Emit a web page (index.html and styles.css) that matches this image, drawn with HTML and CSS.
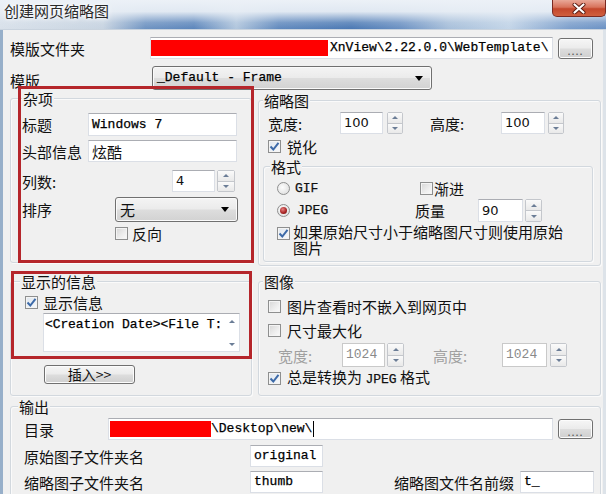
FILE: index.html
```html
<!DOCTYPE html>
<html lang="zh-CN">
<head>
<meta charset="utf-8">
<title>创建网页缩略图</title>
<link rel="stylesheet" href="styles.css">
</head>
<body>
<div class="win">
  <div class="titlebar">
    <div class="title">创建网页缩略图</div>
    <div class="close"><svg width="14" height="11" viewBox="0 0 14 11"><path d="M2.5 1.5 L11.5 9.5 M11.5 1.5 L2.5 9.5" stroke="#5a1a10" stroke-width="4" stroke-linecap="round"/><path d="M2.5 1.5 L11.5 9.5 M11.5 1.5 L2.5 9.5" stroke="#fff" stroke-width="2.2" stroke-linecap="round"/></svg></div>
  </div>
  <div class="client">
    <div class="row r-folder">
      <span class="lbl lw-folder">模版文件夹</span>
      <div class="edit e-folder"><span class="redact rd-folder"></span><span class="mono">XnView\2.22.0.0\WebTemplate\</span></div>
      <div class="btn b-dots">....</div>
    </div>
    <div class="row r-tpl">
      <span class="lbl lw-tpl">模版</span>
      <div class="combo c-tpl"><span class="mono">_Default - Frame</span><span class="arrow"></span></div>
    </div>

    <div class="mid">
      <div class="col">
        <div class="group g-misc">
          <div class="legend">杂项</div>
          <div class="row m1"><span class="lbl lw-66">标题</span><div class="edit e-149"><span class="mono">Windows 7</span></div></div>
          <div class="row m2"><span class="lbl lw-66">头部信息</span><div class="edit e-149 e-h22"><span class="cjk">炫酷</span></div></div>
          <div class="row m3"><span class="lbl lw-150">列数:</span><div class="edit e-num"><span class="num">4</span></div><div class="spin sp-m3"><i class="up"></i><i class="dn"></i></div></div>
          <div class="row m4"><span class="lbl lw-93">排序</span><div class="combo c-sort"><span>无</span><span class="arrow"></span></div></div>
          <div class="row m5"><span class="chk"></span><span class="lbl">反向</span></div>
        </div>
        <div class="group g-info">
          <div class="legend">显示的信息</div>
          <div class="row i-chk"><span class="chk on"><svg width="11" height="11" viewBox="0 0 11 11"><path d="M1.5 5.5 L4.3 8.5 L9.5 1.8" fill="none" stroke="#3d6aa8" stroke-width="2"/></svg></span><span class="lbl">显示信息</span></div>
          <div class="memo"><span class="mono memo-text">&lt;Creation Date&gt;&lt;File T:</span><div class="vscroll"><i class="up"></i><i class="dn"></i></div></div>
          <div class="btn b-insert">插入&gt;&gt;</div>
        </div>
      </div>

      <div class="col">
        <div class="group g-thumb">
          <div class="legend">缩略图</div>
          <div class="row t1">
            <span class="lbl lw-72">宽度:</span><div class="edit e-num"><span class="num">100</span></div><div class="spin sp-t1a"><i class="up"></i><i class="dn"></i></div>
            <span class="lbl lw-71 hgt">高度:</span><div class="edit e-num e-44"><span class="num">100</span></div><div class="spin sp-t1b"><i class="up"></i><i class="dn"></i></div>
          </div>
          <div class="row t2"><span class="chk on"><svg width="11" height="11" viewBox="0 0 11 11"><path d="M1.5 5.5 L4.3 8.5 L9.5 1.8" fill="none" stroke="#3d6aa8" stroke-width="2"/></svg></span><span class="lbl">锐化</span></div>
          <div class="group g-fmt">
            <div class="legend">格式</div>
            <div class="row f1">
              <div class="fcol"><span class="radio"></span><span class="lbl mono-l">GIF</span></div>
              <span class="chk ck-prog"></span><span class="lbl">渐进</span>
            </div>
            <div class="row f2">
              <div class="fcol fcol2"><span class="radio sel"><b></b></span><span class="lbl mono-l">JPEG</span></div>
              <span class="lbl lw-63">质量</span><div class="edit e-q"><span class="num">90</span></div><div class="spin sp-q"><i class="up"></i><i class="dn"></i></div>
            </div>
            <div class="row f3"><span class="chk on"><svg width="11" height="11" viewBox="0 0 11 11"><path d="M1.5 5.5 L4.3 8.5 L9.5 1.8" fill="none" stroke="#3d6aa8" stroke-width="2"/></svg></span><span class="lbl wrap">如果原始尺寸小于缩略图尺寸则使用原始图片</span></div>
          </div>
        </div>
        <div class="group g-img">
          <div class="legend">图像</div>
          <div class="row g1"><span class="chk"></span><span class="lbl">图片查看时不嵌入到网页中</span></div>
          <div class="row g2"><span class="chk"></span><span class="lbl">尺寸最大化</span></div>
          <div class="row g3 dis">
            <span class="lbl lw-74">宽度:</span><div class="edit e-num e-dis"><span class="mono">1024</span></div><div class="spin sp-g3a"><i class="up"></i><i class="dn"></i></div>
            <span class="lbl lw-69 hgt2">高度:</span><div class="edit e-num e-45 e-dis"><span class="mono">1024</span></div><div class="spin sp-g3b"><i class="up"></i><i class="dn"></i></div>
          </div>
          <div class="row g4"><span class="chk on"><svg width="11" height="11" viewBox="0 0 11 11"><path d="M1.5 5.5 L4.3 8.5 L9.5 1.8" fill="none" stroke="#3d6aa8" stroke-width="2"/></svg></span><span class="lbl">总是转换为 <span class="mono-l">JPEG</span> 格式</span></div>
        </div>
      </div>
    </div>

    <div class="group g-out">
      <div class="legend">输出</div>
      <div class="row o1">
        <span class="lbl lw-84">目录</span>
        <div class="edit e-dir"><span class="redact rd-dir"></span><span class="mono">\Desktop\new\</span><span class="caret"></span></div>
        <div class="btn b-dots">....</div>
      </div>
      <div class="row o2"><span class="lbl lw-226">原始图子文件夹名</span><div class="edit e-sub"><span class="mono">original</span></div></div>
      <div class="row o3">
        <span class="lbl lw-226">缩略图子文件夹名</span><div class="edit e-sub"><span class="mono">thumb</span></div>
        <span class="lbl lw-126 pre">缩略图文件名前缀</span><div class="edit e-pre"><span class="mono">t_</span></div>
      </div>
    </div>
  </div>

  <div class="mark mk1"></div>
  <div class="mark mk2"></div>
</div>
</body>
</html>
```

FILE: styles.css
```css
* { box-sizing: border-box; }
html, body { margin: 0; padding: 0; }
body {
  width: 606px; height: 494px; overflow: hidden;
  font-family: "Noto Sans CJK SC", "Microsoft YaHei", sans-serif;
  font-size: 15px; color: #111; background: #f0f0f0;
}
.win { position: relative; width: 606px; height: 494px; display: flex; flex-direction: column; overflow: hidden; }

/* title bar */
.titlebar {
  height: 30px; flex: none; display: flex; align-items: flex-start;
  background:
    linear-gradient(to bottom, rgba(236,241,247,1) 0%, rgba(232,238,245,0.95) 40%, rgba(225,233,242,0.2) 78%, rgba(225,233,242,0) 100%),
    linear-gradient(to right, #d9e1ea 0%, #c8d4e1 17%, #6d92c1 24%, #5b85bb 32%, #b1c6dd 39%, #5f88bd 46%, #4a78b3 58%, #6a90c2 66%, #a7bfda 74%, #c3d5e8 84%, #7b9ecb 94%, #6a91c4 100%);
  border-bottom: 1px solid #c9d3de;
}
.title { font-size: 15px; line-height: 18px; padding: 2px 0 0 4px; color: #2a2a2a; text-shadow: 0 0 6px #fff, 0 0 3px #fff; }
.close {
  margin-left: auto; margin-right: 0; width: 54px; height: 17px;
  border: 1px solid #7a2a22; border-top: none; border-radius: 0 0 5px 5px;
  background: linear-gradient(to bottom, #e9a898 0%, #d8735c 45%, #c4472c 55%, #d0603f 100%);
  display: flex; align-items: center; justify-content: center;
}

/* client */
.client {
  flex: 1; display: flex; flex-direction: column;
  border-left: 3px solid #97afc9; border-right: 3px solid #dde3e9;
  padding: 7px 2px 0 7px; background: #f0f0f0;
}
.row { display: flex; align-items: center; flex: none; }
.lbl { display: block; flex: none; line-height: 17px; white-space: nowrap; }
.mono { font-family: "Liberation Mono", monospace; font-size: 13px; line-height: 16px; white-space: pre; color: #000; -webkit-text-stroke: 0.25px #000; }
.mono-l { font-family: "Liberation Mono", monospace; font-size: 13px; -webkit-text-stroke: 0.25px currentColor; }
.num { font-family: "DejaVu Sans", "Liberation Sans", sans-serif; font-size: 13px; line-height: 16px; }
.cjk { font-size: 15px; line-height: 17px; }

/* edits */
.edit {
  flex: none; height: 22px; background: #fff; display: flex; align-items: center;
  border: 1px solid #dbdfe6; border-top-color: #abadb3; padding: 0 3px; overflow: hidden;
}
.redact { display: block; flex: none; background: #f00; height: 16px; }
.caret { display: block; width: 1px; height: 16px; background: #000; margin-left: 1px; }

/* buttons / combos */
.btn {
  flex: none; border: 1px solid #707070; border-radius: 3px;
  background: linear-gradient(to bottom, #f6f6f6 0%, #ebebeb 48%, #dddddd 52%, #cfcfcf 100%);
  display: flex; align-items: center; justify-content: center;
  box-shadow: inset 0 0 0 1px #fcfcfc;
}
.b-dots { width: 35px; height: 21px; margin-left: 5px; font-size: 11px; letter-spacing: 1px; color: #555; line-height: 10px; padding-top: 4px; }
.combo {
  flex: none; display: flex; align-items: center; justify-content: space-between;
  border: 1px solid #707070; border-radius: 3px; padding: 0 8px 0 4px;
  background: linear-gradient(to bottom, #f4f4f4 0%, #ebebeb 48%, #dddddd 52%, #d2d2d2 100%);
  box-shadow: inset 0 0 0 1px #fafafa;
}
.arrow { width: 0; height: 0; border-left: 4px solid transparent; border-right: 4px solid transparent; border-top: 5px solid #000; }

/* spin */
.spin { flex: none; display: flex; flex-direction: column; height: 22px; width: 17px; border: 1px solid #c4c7cc; border-radius: 2px; background: #f3f3f3; }
.spin i, .vscroll i { flex: 1; display: flex; align-items: center; justify-content: center; background: linear-gradient(#fafafa, #e9e9e9); }
.spin i + i { border-top: 1px solid #c4c7cc; }
.spin i::after, .vscroll i::after { content: ""; width: 0; height: 0; border-left: 3px solid transparent; border-right: 3px solid transparent; }
.spin .up::after, .vscroll .up::after { border-bottom: 3px solid #6b7d96; }
.spin .dn::after, .vscroll .dn::after { border-top: 3px solid #6b7d96; }

/* check / radio */
.chk {
  flex: none; width: 13px; height: 13px; border: 1px solid #8e8f8f;
  background: linear-gradient(135deg, #d6d6d6 0%, #eeeeee 60%, #fbfbfb 100%);
  box-shadow: inset 0 0 0 1px #f4f4f4; display: flex; align-items: center; justify-content: center;
  margin-right: 4px;
}
.chk.on { background: linear-gradient(135deg, #dfe6ee, #f7f9fb); }
.radio {
  flex: none; width: 13px; height: 13px; border-radius: 50%; border: 1px solid #8e8f8f;
  background: radial-gradient(circle at 40% 40%, #fdfdfd, #d9d9d9);
  display: flex; align-items: center; justify-content: center;
}
.radio b { width: 7px; height: 7px; border-radius: 50%; background: radial-gradient(circle at 40% 35%, #e88080, #a32020 60%, #6a1010); }

/* groups */
.group {
  flex: none; border: 1px solid #d2d8de; border-radius: 3px;
  box-shadow: inset 1px 1px 0 #fafafa, 1px 1px 0 #fafafa;
}
.legend { width: fit-content; height: 17px; line-height: 17px; margin-top: -9px; background: #f0f0f0; padding: 0 1px; white-space: nowrap; }

/* top rows */
.r-folder { height: 22px; }
.lw-folder { width: 140px; padding-top: 1px; }
.e-folder { width: 403px; padding-left: 0; }
.rd-folder { width: 177px; margin-right: 2px; }
.r-tpl { margin-top: 7px; height: 24px; }
.lw-tpl { width: 142px; padding-top: 4px; }
.c-tpl { width: 280px; height: 24px; }

/* middle */
.mid { display: grid; grid-template-columns: 242px 343px; column-gap: 6px; }
.col { display: flex; flex-direction: column; }

.g-misc { margin-top: 8px; height: 165px; padding-left: 11px; }
.m1 { margin-top: 6px; }
.lw-66 { width: 66px; }
.e-149 { width: 149px; height: 23px; }
.e-h22 { height: 22px; }
.m2 { margin-top: 4px; }
.m3 { margin-top: 8px; }
.lw-150 { width: 150px; }
.e-num { width: 43px; }
.sp-m3 { margin-left: 2px; width: 18px; }
.m4 { margin-top: 5px; }
.lw-93 { width: 93px; }
.c-sort { width: 123px; height: 25px; }
.m5 { margin-top: 3px; padding-left: 93px; }
.m5 .chk { margin-right: 4px; }

.g-info { margin-top: 18px; height: 115px; padding-left: 14px; }
.g-info .legend { margin-left: -5px; }
.i-chk { margin-top: 4px; }
.i-chk .chk { margin-right: 5px; }
.memo { margin-left: 18px; margin-top: 2px; width: 197px; height: 39px; background: #fff; border: 1px solid #dbdfe6; border-top-color: #abadb3; display: flex; padding: 3px 0 0 1px; }
.memo-text { flex: 1; overflow: hidden; letter-spacing: -0.1px; }
.vscroll { width: 14px; flex: none; display: flex; flex-direction: column; justify-content: space-between; margin-top: -3px; padding: 2px 0; }
.vscroll i { flex: none; height: 10px; background: none; }
.b-insert { margin-left: 19px; margin-top: 13px; width: 91px; height: 19px; font-size: 14px; line-height: 17px; }

.g-thumb { margin-top: 10px; height: 166px; padding-left: 9px; }
.g-thumb > .legend { margin-left: -5px; }
.t1 { margin-top: 3px; }
.lw-72 { width: 72px; }
.sp-t1a { margin-left: 4px; width: 16px; }
.hgt { margin-left: 27px; }
.lw-71 { width: 71px; }
.e-44 { width: 44px; }
.sp-t1b { margin-left: 3px; width: 16px; }
.t2 { margin-top: 4px; }
.t2 .chk { margin-right: 6px; }

.g-fmt { margin-left: -5px; margin-right: 7px; margin-top: 11px; height: 96px; padding-left: 13px; }
.g-fmt .legend { margin-left: -7px; }
.f1 { margin-top: 5px; height: 17px; }
.fcol { width: 138px; display: flex; align-items: center; flex: none; }
.fcol .radio { margin-right: 5px; }
.fcol2 { width: 138px; }
.fcol2 .radio { margin-right: 7px; }
.ck-prog { margin-left: 5px; margin-right: 1px; }
.f2 { margin-top: 2px; height: 23px; }
.lw-63 { width: 63px; }
.e-q { width: 45px; height: 23px; }
.sp-q { margin-left: 2px; width: 17px; height: 23px; }
.f3 { margin-top: 2px; align-items: flex-start; }
.f3 .chk { margin-top: 3px; margin-right: 3px; }
.wrap { white-space: normal; width: 274px; line-height: 16px; }

.g-img { margin-top: 15px; height: 115px; padding-left: 9px; }
.g-img .legend { margin-left: -5px; }
.g-img .chk { margin-right: 6px; }
.g1 { margin-top: 8px; }
.g2 { margin-top: 7px; }
.g3 { margin-top: 4px; height: 24px; }
.dis .lbl { color: #a0a0a0; }
.lw-74 { width: 64px; margin-left: 10px; }
.e-dis { border-color: #c9c9c9; height: 24px; }
.e-dis .mono { color: #8a8a8a; -webkit-text-stroke: 0; }
.sp-g3a { margin-left: 2px; height: 24px; }
.hgt2 { margin-left: 29px; }
.lw-69 { width: 69px; }
.e-45 { width: 45px; }
.sp-g3b { margin-left: 3px; height: 24px; }
.g4 { margin-top: 1px; }

.g-out { margin-top: 10px; height: 100px; padding-left: 13px; }
.g-out .legend { margin-left: -6px; }
.o1 { margin-top: 3px; }
.lw-84 { width: 84px; }
.e-dir { width: 445px; padding-left: 1px; }
.rd-dir { width: 101px; }
.o1 .b-dots { height: 20px; }
.o2 { margin-top: 5px; }
.lw-226 { width: 226px; }
.e-sub { width: 73px; }
.o3 { margin-top: 4px; }
.pre { margin-left: 71px; }
.lw-126 { width: 126px; }
.e-pre { width: 74px; }

/* annotation boxes */
.mark { position: absolute; border: 3px solid #b5262b; pointer-events: none; }
.mk1 { left: 18px; top: 86px; width: 236px; height: 177px; }
.mk2 { left: 11px; top: 271px; width: 241px; height: 88px; }
```
